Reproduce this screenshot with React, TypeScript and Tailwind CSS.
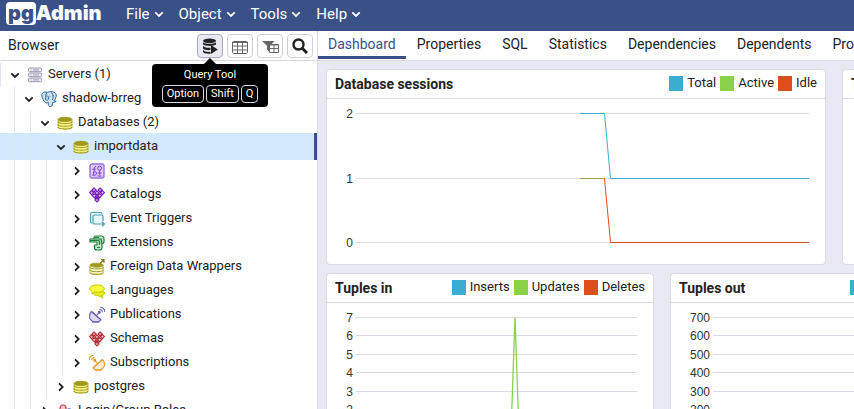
import type { ReactNode } from "react";

type IconName =
  | "servers"
  | "postgres"
  | "database"
  | "casts"
  | "catalogs"
  | "triggers"
  | "extensions"
  | "foreign"
  | "languages"
  | "publications"
  | "schemas"
  | "subscriptions"
  | "roles";

const diamonds = [
  [5, 3], [11, 3],
  [2.6, 5.6], [7.9, 5.9], [13.4, 5.6],
  [5.3, 8.6], [10.7, 8.6],
  [8, 11.3], [8, 13],
];

function DiamondCluster({ color, fill }: { color: string; fill: string }) {
  return (
    <g fill={fill} stroke={color} strokeWidth="1.2">
      {diamonds.map(([x, y]) => (
        <path key={`${x}-${y}`} d={`M${x} ${y - 2}l2 2l-2 2l-2-2z`} />
      ))}
    </g>
  );
}

function Cylinder({ dark }: { dark?: boolean }) {
  const body = dark ? "#fffbe0" : "#f5f08a";
  return (
    <g stroke="#a39a1c" strokeWidth="1" transform="translate(0 1.4) scale(1 .84)">
      <path d="M1 4v8.600c0 1.300 3 2.400 7 2.400s7-1.100 7-2.400V4z" fill={body} stroke="#c4bb3c" />
      <path d="M1 6c0 1.300 3 2.400 7 2.400S15 7.300 15 6M1 9.300c0 1.300 3 2.400 7 2.400s7-1.100 7-2.400M1 12.600c0 1.300 3 2.400 7 2.400s7-1.100 7-2.400" fill="none" strokeWidth="1.200" />
      <ellipse cx="8" cy="3.600" rx="7" ry="2.500" fill="#a39a1c" />
    </g>
  );
}

function Dish({ color, fill, flip }: { color: string; fill: string; flip?: boolean }) {
  return (
    <g stroke={color} fill="none" strokeWidth="1.1" transform={flip ? "translate(16 0) scale(-1 1)" : undefined}>
      <path d="M2.500 4.500C-.8 8 0 12.500 3.500 14.200c3 1.600 6.500.8 8.500-1.400z" fill={fill} />
      <path d="M2.500 4.500l9.500 8.300M7.300 8.700l2.700-3M3 14.900h7.500" />
      <circle cx="10.300" cy="5.300" r="1" fill={color} />
      <path d="M10.500 2.400c1.700-.1 2.900 1.200 2.800 2.900M11 .2c2.900 0 4.900 2 4.800 4.900" />
    </g>
  );
}

const treeIcons: Record<IconName, ReactNode> = {
  servers: (
    <g fill="#f1eff7" stroke="#9a94b3" strokeWidth="1">
      <rect x="1.500" y="1" width="13" height="3.700" rx="1" />
      <rect x="1.500" y="6" width="13" height="3.700" rx="1" />
      <rect x="1.500" y="11" width="13" height="3.700" rx="1" />
      <path d="M3.500 2.900h1M6 2.900h6M3.500 7.900h1M6 7.900h6M3.500 12.900h1M6 12.900h6" />
    </g>
  ),
  postgres: (
    <g fill="#cfe3f5" stroke="#2f6592" strokeWidth="1" strokeLinejoin="round">
      <path d="M4.500 11.500C2.500 10.500.7 6.300.8 3.800.9 1.500 3.500.5 6 1.300 9 .2 14.600.3 15.200 3.600c.3 2.200-1 5-2.400 6.400 1 .2 1.900 0 2.400-.1-.5 1.300-2 1.800-3.700 1.600-.2 1.800.2 3.600-2 4-2 .3-2.300-1.300-2.300-4.300-1 .8-1.800.9-2.700.3z" />
      <path d="M5.800 1.500C4.300 3.500 5 6.800 4.600 8.500c.8 1 2 .8 2.700 0C8 6.500 7 4.300 5.400 4.900M10 1.300c2 1.500 3 4.400 1.300 7.700M8.500 5.200l.8.300M11.600 4.800l1-.3" fill="none" />
    </g>
  ),
  database: <Cylinder />,
  casts: (
    <g fill="none" stroke="#7a3fd0" strokeWidth="1">
      <rect x="1" y="1" width="14" height="14" rx="2" fill="#dccbfa" stroke="#9670de" strokeWidth="1.400" />
      <path d="M7 3.500c-2-.4-1.500 2-1.800 3.700L4.500 12M3.300 6.200h3.400M4 9.500c2-1.500 4-.5 3.500 1.300S4 13 3.500 12" />
      <circle cx="10.600" cy="5.200" r="2" />
      <path d="M10.600 7.200v4.500M8.800 10h3.700M8.500 13h4" />
    </g>
  ),
  catalogs: <DiamondCluster color="#7a1fb8" fill="#e3c1f5" />,
  triggers: (
    <g fill="#e9fbfd" stroke="#4a9cb5" strokeWidth="1.200">
      <path d="M1.500 10.500V3c0-1 .5-1.500 1.500-1.500h8.500c1 0 1.500.5 1.500 1.500M1.500 10.500c0 1 .5 1.500 1.500 1.500" />
      <path d="M14 10V5.300c0-.8-.5-1.300-1.300-1.300H5.300C4.500 4 4 4.500 4 5.300v6.400c0 .8.500 1.300 1.300 1.300H15.500M13 10.800l2.300 2.200-2.300 2.200" />
    </g>
  ),
  extensions: (
    <g fill="#bfe8c8" stroke="#188038" strokeWidth="1.200" strokeLinejoin="round">
      <path d="M5 4V2.500C5 1.500 5.500 1 6.500 1H12c1.800 0 3 1.200 3 3v2.500c0 1.300-.8 2-2 2v4c0 1.700-1 2.500-2.500 2.500H8c-1.700 0-2.500-1-2.500-2.500V10H8V7H1V4z" />
      <path d="M1 5.500h8.500c.8 0 1 .5 1 1V10M5 4h5.500c1.500 0 2 .7 2 2v2.500M8 12.500h3M12 3.500v1M6 2.500h4" fill="none" />
    </g>
  ),
  foreign: (
    <g>
      <g transform="translate(0 2) scale(.95 .95)"><Cylinder dark /></g>
      <path d="M11 4.500L14.500 1M12 .7h3v3" stroke="#8c7a18" strokeWidth="1.300" fill="none" />
    </g>
  ),
  languages: (
    <g stroke="#c9c400" strokeWidth="1" strokeLinejoin="round">
      <path d="M4 9.500C4 7.500 7 7 10 7s5.500 1 5.500 3-1.700 2.500-3.200 2.700l1.700 2.300-4.500-2.200C6.500 12.800 4 11.500 4 9.500z" fill="#e6ec20" />
      <path d="M.7 5.800C.7 3.300 4 2 8 2s7.200 1.200 7.200 3.700S12 9.300 8 9.300c-1 0-1.800 0-2.600-.2L3 11V8.500C1.500 8 .7 7 .7 5.800z" fill="#f7fb3d" />
    </g>
  ),
  publications: <Dish color="#6a5fb5" fill="#dcdaf2" />,
  schemas: <DiamondCluster color="#b5323a" fill="#f6caca" />,
  subscriptions: <Dish color="#e09a35" fill="#fdebcf" flip />,
  roles: (
    <g strokeWidth="1.200">
      <path d="M1 15c0-4 2-6 5-6s5 2 5 6z" fill="#f8cccc" stroke="#c23b45" />
      <circle cx="6" cy="5" r="3" fill="#f8cccc" stroke="#c23b45" />
      <circle cx="12" cy="8" r="2.200" fill="#cdd4f8" stroke="#4a5fc0" />
      <path d="M8 16c0-3 1.500-4.500 4-4.500s4 1.500 4 4.500z" fill="#cdd4f8" stroke="#4a5fc0" />
    </g>
  ),
};

type Node = { label: string; depth: number; icon: IconName; open?: boolean; selected?: boolean };

const nodes: Node[] = [
  { label: "Servers (1)", depth: 0, icon: "servers", open: true },
  { label: "shadow-brreg", depth: 1, icon: "postgres", open: true },
  { label: "Databases (2)", depth: 2, icon: "database", open: true },
  { label: "importdata", depth: 3, icon: "database", open: true, selected: true },
  { label: "Casts", depth: 4, icon: "casts" },
  { label: "Catalogs", depth: 4, icon: "catalogs" },
  { label: "Event Triggers", depth: 4, icon: "triggers" },
  { label: "Extensions", depth: 4, icon: "extensions" },
  { label: "Foreign Data Wrappers", depth: 4, icon: "foreign" },
  { label: "Languages", depth: 4, icon: "languages" },
  { label: "Publications", depth: 4, icon: "publications" },
  { label: "Schemas", depth: 4, icon: "schemas" },
  { label: "Subscriptions", depth: 4, icon: "subscriptions" },
  { label: "postgres", depth: 3, icon: "database" },
  { label: "Login/Group Roles", depth: 2, icon: "roles" },
];

function Chevron({ open, className }: { open?: boolean; className: string }) {
  return (
    <svg viewBox="0 0 12 12" className={className} fill="none" stroke="currentColor" strokeWidth="1.8" aria-hidden="true">
      <path d={open ? "M2.300 4.300l3.700 3.700l3.700-3.700" : "M4 2.300l3.700 3.700l-3.700 3.700"} />
    </svg>
  );
}

function TreeRow({ node }: { node: Node }) {
  return (
    <li
      role="treeitem"
      aria-expanded={Boolean(node.open)}
      aria-selected={Boolean(node.selected)}
      className="relative flex h-6 items-center whitespace-nowrap"
    >
      {node.selected && (
        <span className="absolute inset-x-0 -top-0.5 -bottom-px border-r-3 border-[#3a5187] bg-[#d2e9fe]" />
      )}
      {node.depth === 0 && <span className="h-full w-px shrink-0 bg-[#e4e4ee]" />}
      {Array.from({ length: node.depth }, (_, i) => (
        <span
          key={i}
          className={`relative h-full shrink-0 border-r border-[#e4e4ee] ${i === 0 ? "w-[15px]" : "w-4"}`}
        />
      ))}
      <Chevron open={node.open} className="relative ml-2 size-3 shrink-0" />
      <svg viewBox="0 0 16 16" className="relative mr-[5px] mb-px ml-1.5 size-4 shrink-0" aria-hidden="true">
        {treeIcons[node.icon]}
      </svg>
      <span className="relative pb-0.5">{node.label}</span>
    </li>
  );
}

function ToolButton({ label, active, children }: { label: string; active?: boolean; children: ReactNode }) {
  return (
    <button
      type="button"
      aria-label={label}
      className={`flex h-6 w-[26px] items-center justify-center rounded border ${
        active ? "border-[#a9aac6] bg-[#e9e9f3] text-[#222222]" : "border-[#cfd0de] bg-white text-[#222222]"
      }`}
    >
      {children}
    </button>
  );
}

function Browser() {
  return (
    <aside className="flex w-[318px] shrink-0 flex-col border-r border-[#d9dae6] bg-white">
      <div className="flex h-[30px] shrink-0 items-center gap-1 border-b border-[#d9dae6] pr-1 pl-2">
        <h2 className="mr-auto pb-0.5">Browser</h2>
        <div className="relative">
          <ToolButton label="Query Tool" active>
            <svg viewBox="0 0 16 16" className="size-4" aria-hidden="true">
              <g fill="#222">
                <ellipse cx="7.500" cy="2.800" rx="6.500" ry="2.300" />
                <path d="M1 4.200c2 2.200 11 2.200 13 0v2.300c-1.500 1.900-11.500 1.900-13 0zM1 8c2 1.900 5.500 2 7.500 1.500v2.600C5 12.400 2 11.900 1 10.600zM1 12.100c1.500 1.700 5 2.100 7.500 1.700v1.900c-3.500.4-7-.2-7.500-1.600z" />
                <path d="M9 7l6.800 4.400l-6.800 4.600z" />
              </g>
            </svg>
          </ToolButton>
          <div
            role="tooltip"
            className="absolute top-[30px] left-1/2 z-10 w-[116px] -translate-x-1/2 rounded bg-black pt-[3px] pb-1 text-center text-[11px] leading-4 text-white"
          >
            <span className="absolute -top-1.5 left-1/2 -translate-x-1/2 border-x-6 border-b-6 border-x-transparent border-b-black" />
            Query Tool
            <div className="mt-0.5 flex justify-center gap-0.5">
              {["Option", "Shift", "Q"].map((key) => (
                <kbd key={key} className="rounded border border-[#d9dae6] px-1 font-[Roboto,sans-serif] leading-4">
                  {key}
                </kbd>
              ))}
            </div>
          </div>
        </div>
        <ToolButton label="View Data">
          <svg viewBox="0 0 16 14" className="mt-1 h-3.5 w-4" fill="none" stroke="#666" aria-hidden="true">
            <rect x=".5" y=".5" width="15" height="12" rx="1" />
            <path d="M0 1.500h16M0 5h16M0 9h16M5.500 1v12M10.500 1v12" />
          </svg>
        </ToolButton>
        <ToolButton label="Filtered Rows">
          <svg viewBox="0 0 17 14" className="mt-0.5 h-3.5 w-[17px]" aria-hidden="true">
            <path d="M0 1h12.500L8 5.800V12l-3-2V5.800z" fill="#666" />
            <path d="M7.500 4.500h9v8h-9z" fill="#fff" stroke="#666" />
            <path d="M7 5h10M7 8.500h10M12 5v8" stroke="#666" />
          </svg>
        </ToolButton>
        <ToolButton label="Search Objects">
          <svg viewBox="0 0 16 16" className="size-4" fill="none" stroke="currentColor" aria-hidden="true">
            <circle cx="6.500" cy="6.500" r="5" strokeWidth="2.400" />
            <path d="M10.300 10.300l4.700 4.700" strokeWidth="3" />
          </svg>
        </ToolButton>
      </div>
      <ul role="tree" aria-label="Object browser" className="pt-0.5 text-[13px]">
        {nodes.map((node) => (
          <TreeRow key={node.label} node={node} />
        ))}
      </ul>
    </aside>
  );
}

type Series = { name: string; color: string };
const blue = "#3aadd1";
const green = "#8ad24a";
const red = "#dc4e1b";

function Card({ title, series, children }: { title: string; series: Series[]; children: ReactNode }) {
  return (
    <section className="overflow-hidden rounded border border-[#d9dae6] bg-white">
      <header className="flex h-[29px] items-center justify-between border-b border-[#d9dae6] px-2">
        <h3 className="font-bold">{title}</h3>
        <ul className="flex gap-1 pb-0.5 text-[13px]">
          {series.map((s) => (
            <li key={s.name} className="flex items-center gap-1">
              <svg viewBox="0 0 14 15" className="h-[15px] w-3.5" aria-hidden="true">
                <rect width="14" height="15" fill={s.color} />
              </svg>
              {s.name}
            </li>
          ))}
        </ul>
      </header>
      {children}
    </section>
  );
}

type Tick = { label: string; y: number };

function Plot({
  ticks, width, height, left, right, children,
}: { ticks: Tick[]; width: number; height: number; left: number; right: number; children?: ReactNode }) {
  return (
    <svg viewBox={`0 0 ${width} ${height}`} className="block w-full font-[Liberation_Sans,Arial,sans-serif] text-xs" fill="none">
      {ticks.map((t) => (
        <g key={t.label}>
          <path d={`M${left} ${t.y + 0.5}H${right}`} stroke="#d9dae6" />
          <text x={left - 3} y={t.y + 4.5} textAnchor="end" fill="#333">{t.label}</text>
        </g>
      ))}
      {children}
    </svg>
  );
}

const sessionTicks = [
  { label: "2", y: 14 },
  { label: "1", y: 79 },
  { label: "0", y: 143 },
];
const tickYs = [14, 32, 51, 69, 88, 106, 125, 143];
const tupleInTicks = tickYs.map((y, i) => ({ label: String(7 - i), y }));
const tupleOutTicks = tickYs.map((y, i) => ({ label: String((7 - i) * 100), y }));

function Dashboard() {
  const sessions = [
    { name: "Total", color: blue },
    { name: "Active", color: green },
    { name: "Idle", color: red },
  ];
  return (
    <div className="flex-1 overflow-hidden bg-[#e9e9f3] p-2">
      <div className="flex min-w-[1016px] flex-col gap-2">
        <div className="grid grid-cols-2 gap-4">
          <Card title="Database sessions" series={sessions}>
            <Plot ticks={sessionTicks} width={498} height={165} left={29} right={482}>
              <path d="M253 79.500H277.500L283.500 143.500H482" stroke={red} />
              <path d="M253 79.500H277.500" stroke="#a6a04a" />
              <path d="M253 14.500H277.500L283.500 79.500H482" stroke={blue} />
            </Plot>
          </Card>
          <Card title="Transactions per second" series={[]}>
            <Plot ticks={[]} width={498} height={165} left={29} right={482} />
          </Card>
        </div>
        <div className="grid grid-cols-3 gap-4">
          <Card
            title="Tuples in"
            series={[
              { name: "Inserts", color: blue },
              { name: "Updates", color: green },
              { name: "Deletes", color: red },
            ]}
          >
            <Plot ticks={tupleInTicks} width={326} height={165} left={29} right={310}>
              <path d="M183.500 143.500L188 14.500L192.500 143.500" stroke={green} strokeWidth="1.300" />
            </Plot>
          </Card>
          <Card
            title="Tuples out"
            series={[
              { name: "Fetched", color: blue },
              { name: "Returned", color: green },
            ]}
          >
            <Plot ticks={tupleOutTicks} width={326} height={165} left={42} right={310} />
          </Card>
          <Card title="Block I/O" series={[]}>
            <Plot ticks={[]} width={326} height={165} left={42} right={310} />
          </Card>
        </div>
      </div>
    </div>
  );
}

const tabs = ["Dashboard", "Properties", "SQL", "Statistics", "Dependencies", "Dependents", "Processes"];

export default function App() {
  return (
    <div className="flex h-screen flex-col overflow-hidden bg-white font-[Roboto,sans-serif] text-sm leading-5 text-[#222222]">
      <header className="flex h-[31px] shrink-0 items-center bg-[#3a5187] pl-1.5 text-white">
        <h1 className="flex h-[31px] w-[104px] items-center pb-1 font-[Inter,sans-serif] text-xl leading-6 font-black">
          <span className="flex h-[23px] items-center rounded bg-white px-0.5 pb-0.5 text-[#3a5187]">pg</span>
          <span className="pb-0.5">Admin</span>
        </h1>
        <nav className="ml-4 flex gap-3.5 pb-1 text-[15px]">
          {["File", "Object", "Tools", "Help"].map((item) => (
            <button key={item} type="button" className="flex items-center gap-[3px]">
              {item}
              <Chevron open className="size-3" />
            </button>
          ))}
        </nav>
      </header>
      <div className="flex min-h-0 flex-1">
        <Browser />
        <main className="flex min-w-0 flex-1 flex-col">
          <div role="tablist" className="flex h-[30px] shrink-0 gap-px overflow-hidden border-b border-[#d9dae6]">
            {tabs.map((tab) => (
              <button
                key={tab}
                type="button"
                role="tab"
                aria-selected={tab === "Dashboard"}
                className={`h-7 shrink-0 border-b-3 px-2.5 ${
                  tab === "Dashboard" ? "border-[#3a5187] text-[#3a5187]" : "border-transparent"
                }`}
              >
                {tab}
              </button>
            ))}
          </div>
          <Dashboard />
        </main>
      </div>
    </div>
  );
}
